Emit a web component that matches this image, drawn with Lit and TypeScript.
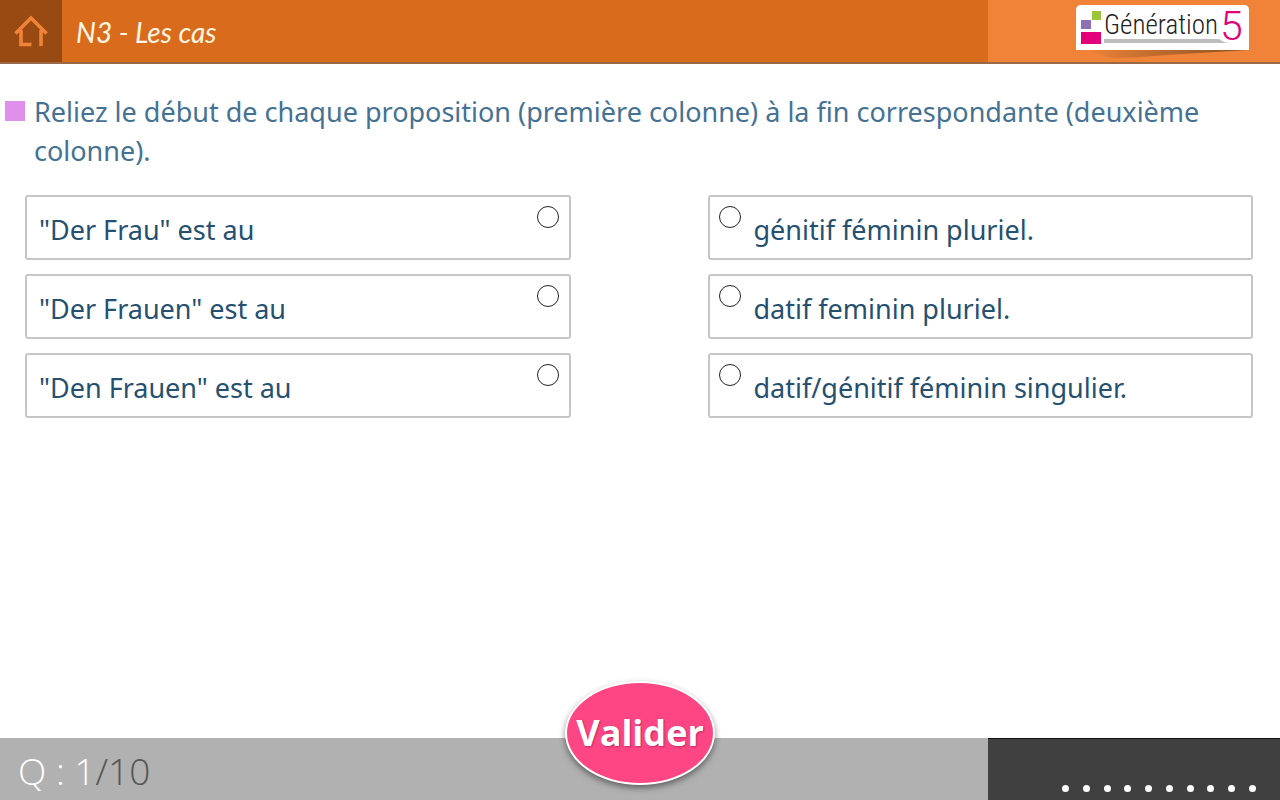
import { LitElement, html, css } from "lit";
import { customElement, state } from "lit/decorators.js";
import { classMap } from "lit/directives/class-map.js";

@customElement("brand-logo")
class BrandLogo extends LitElement {
  static styles = css`
    :host { display: block; width: 173px; }
    .logo { display: block; width: 100%; height: 58px; overflow: visible; }
    .name { font-family: "Roboto Condensed", Roboto, sans-serif; font-size: 27px; font-weight: 300; fill: #222; }
    .five { font-family: Roboto, sans-serif; font-size: 41px; font-weight: 300; fill: #e2007a; }
  `;
  render() {
    return html`
      <svg class="logo" viewBox="0 0 173 58" role="img" aria-label="Génération 5">
        <defs>
          <linearGradient id="shade" x1="0" x2="1">
            <stop offset="0" stop-color="#7a4a25" stop-opacity="0" />
            <stop offset="0.6" stop-color="#8a5227" stop-opacity="0.65" />
            <stop offset="1" stop-color="#7a4820" stop-opacity="0.9" />
          </linearGradient>
        </defs>
        <path d="M12 46H172L90 51Q60 54 34 54Z" fill="url(#shade)" />
        <path d="M5 1H168Q173 1 173 6V46H0V6Q0 1 5 1Z" fill="#fff" />
        <rect x="16" y="7" width="9" height="9" fill="#9cc53b" />
        <rect x="5" y="16" width="10" height="9" fill="#9070b4" />
        <rect x="5" y="28" width="20" height="12" fill="#e2007a" />
        <path d="M28 35H143Q148 39 154 39H28Z" fill="#bdbdbd" />
        <text class="name" x="28" y="30">Génération</text>
        <text class="five" x="144" y="36">5</text>
      </svg>
    `;
  }
}

@customElement("app-root")
class AppRoot extends LitElement {
  @state() private left = -1;
  @state() private right = -1;

  private starts = ['"Der Frau" est au', '"Der Frauen" est au', '"Den Frauen" est au'];
  private ends = ["génitif féminin pluriel.", "datif feminin pluriel.", "datif/génitif féminin singulier."];
  private total = 10;

  static styles = css`
    :host {
      display: flex;
      flex-direction: column;
      min-height: 100vh;
      background: #fff;
      font-family: "Noto Sans", "Open Sans", sans-serif;
      color: #25506f;
    }
    * { box-sizing: border-box; }
    .header {
      display: flex;
      height: 64px;
      background: #d96c1c;
      border-bottom: 2px solid #9a6a48;
    }
    .home {
      display: flex;
      align-items: center;
      justify-content: center;
      width: 62px;
      padding: 0;
      border: 0;
      background: #984a12;
      cursor: pointer;
    }
    .home-icon { width: 36px; height: 36px; }
    .title {
      flex: 1;
      margin: 0;
      padding-left: 14px;
      font: italic 400 28px/64px Lato, sans-serif;
      color: #fff6e4;
    }
    .brand {
      display: flex;
      width: 292px;
      padding: 4px 31px 0 0;
      justify-content: flex-end;
      background: #f08337;
    }
    .main { flex: 1; padding: 28px 27px 24px 5px; }
    .prompt {
      display: flex;
      gap: 9px;
      margin: 0 0 25px;
      font-size: 27px;
      font-weight: 400;
      line-height: 39px;
      color: #457292;
    }
    .marker { flex: none; width: 20px; height: 20px; margin-top: 9px; background: #de90ea; }
    .columns {
      display: grid;
      grid-template-columns: 1fr 1fr;
      gap: 137px;
      padding-left: 20px;
    }
    .column { display: grid; gap: 13px; margin: 0; padding: 0; border: 0; min-width: 0; }
    .card {
      display: flex;
      align-items: flex-start;
      gap: 13px;
      min-height: 65px;
      padding: 9px 10px 4px 12px;
      border: 2px solid #c6c6c6;
      border-radius: 3px;
      font-size: 27px;
      font-weight: 400;
      line-height: 48px;
      cursor: pointer;
    }
    .column { gap: 14px; }
    .card.end { padding-left: 9px; }
    .text { flex: 1; }
    .link {
      appearance: none;
      flex: none;
      width: 22px;
      height: 22px;
      margin: 0;
      border: 1px solid #222;
      border-radius: 50%;
      background: #fff;
      cursor: pointer;
    }
    .link:checked { background: #fe4684; }
    .footer {
      display: grid;
      grid-template-columns: 1fr 292px;
      position: relative;
      height: 62px;
      background: #b1b1b1;
    }
    .count {
      margin: 0;
      padding: 5px 0 0 18px;
      font: 300 37px/56px "Open Sans", "Noto Sans", sans-serif;
      color: #555;
    }
    .current { color: #fff; }
    .progress {
      display: flex;
      align-items: flex-end;
      justify-content: space-between;
      margin: 0;
      padding: 0 24px 8px 74px;
      list-style: none;
      background: #404040;
      border-top: 1px solid #111;
    }
    .dot { width: 7px; height: 7px; border-radius: 50%; background: #fff; }
    .submit {
      position: absolute;
      left: 50%;
      bottom: 15px;
      width: 150px;
      height: 104px;
      margin-left: -75px;
      padding: 0;
      border: 2px solid #fff;
      border-radius: 50%;
      background: #fe4684;
      box-shadow: 0 3px 6px rgba(0, 0, 0, 0.45);
      font: 700 36px/48px "Open Sans", "Noto Sans", sans-serif;
      color: #fff;
      text-shadow: 1px 1px 2px rgba(90, 0, 50, 0.4);
      cursor: pointer;
    }
  `;

  render() {
    return html`
      <header class="header">
        <button class="home" type="button" aria-label="Accueil">
          <svg class="home-icon" viewBox="0 0 36 36" fill="none" stroke="#f08337" stroke-width="3.6">
            <path d="M2.500 20.500L18 5L33.500 20.500" />
            <path d="M8 17V31.500H18.500M28 17V33" />
          </svg>
        </button>
        <h1 class="title">N3 - Les cas</h1>
        <div class="brand"><brand-logo></brand-logo></div>
      </header>
      <main class="main">
        <h2 class="prompt">
          <span class="marker"></span>
          <span>Reliez le début de chaque proposition (première colonne) à la fin correspondante (deuxième colonne).</span>
        </h2>
        <div class="columns">
          <fieldset class="column" aria-label="Première colonne">
            ${this.starts.map((t, i) => html`
              <label class="card">
                <span class="text">${t}</span>
                <input class="link" type="radio" name="start" .checked=${this.left === i} @change=${() => (this.left = i)} />
              </label>`)}
          </fieldset>
          <fieldset class="column" aria-label="Deuxième colonne">
            ${this.ends.map((t, i) => html`
              <label class=${classMap({ card: true, end: true })}>
                <input class="link" type="radio" name="end" .checked=${this.right === i} @change=${() => (this.right = i)} />
                <span class="text">${t}</span>
              </label>`)}
          </fieldset>
        </div>
      </main>
      <footer class="footer">
        <p class="count"><span class="current">Q : 1</span>/${this.total}</p>
        <ul class="progress">
          ${Array.from({ length: this.total }, () => html`<li class="dot"></li>`)}
        </ul>
        <button class="submit" type="button">Valider</button>
      </footer>
    `;
  }
}
